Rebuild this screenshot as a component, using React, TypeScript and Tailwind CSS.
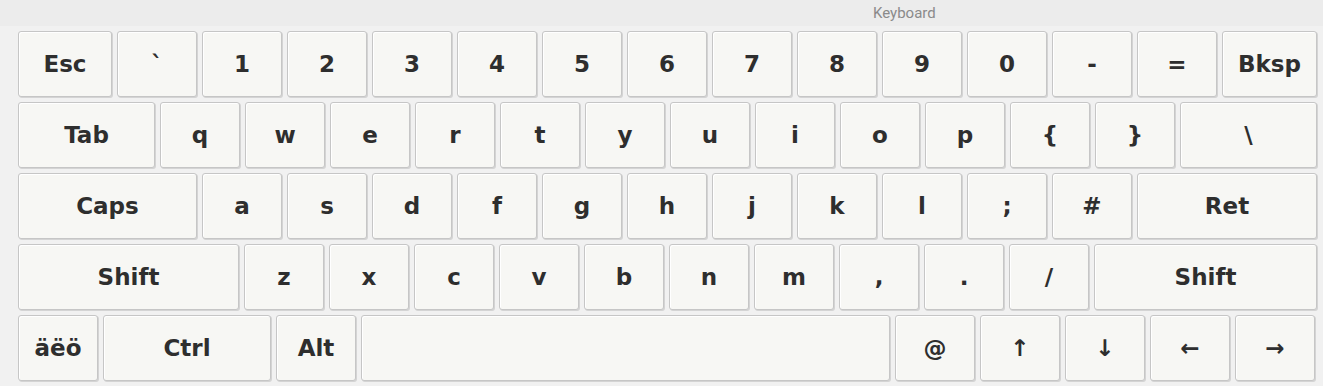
import React from "react";

type K = { l: string; w?: string };

const rows: K[][] = [
  [
    { l: "Esc", w: "w-[94px]" },
    { l: "`" }, { l: "1" }, { l: "2" }, { l: "3" }, { l: "4" }, { l: "5" }, { l: "6" },
    { l: "7" }, { l: "8" }, { l: "9" }, { l: "0" }, { l: "-" }, { l: "=" },
    { l: "Bksp", w: "flex-1" },
  ],
  [
    { l: "Tab", w: "w-[137px]" },
    { l: "q" }, { l: "w" }, { l: "e" }, { l: "r" }, { l: "t" }, { l: "y" }, { l: "u" },
    { l: "i" }, { l: "o" }, { l: "p" }, { l: "{" }, { l: "}" },
    { l: "\\", w: "flex-1" },
  ],
  [
    { l: "Caps", w: "w-[179px]" },
    { l: "a" }, { l: "s" }, { l: "d" }, { l: "f" }, { l: "g" }, { l: "h" }, { l: "j" },
    { l: "k" }, { l: "l" }, { l: ";" }, { l: "#" },
    { l: "Ret", w: "flex-1" },
  ],
  [
    { l: "Shift", w: "w-[221px]" },
    { l: "z" }, { l: "x" }, { l: "c" }, { l: "v" }, { l: "b" }, { l: "n" }, { l: "m" },
    { l: "," }, { l: "." }, { l: "/" },
    { l: "Shift", w: "flex-1" },
  ],
  [
    { l: "äëö" },
    { l: "Ctrl", w: "w-[168px]" },
    { l: "Alt" },
    { l: "", w: "w-[529px]" },
    { l: "@" }, { l: "↑" }, { l: "↓" }, { l: "←" }, { l: "→" },
  ],
];

function Key({ k }: { k: K }) {
  return (
    <div
      className={`${k.w ?? "w-20"} h-[66px] shrink-0 flex items-center justify-center rounded-[3px] border border-[#c6c6c6] bg-[#f7f7f4] shadow-[inset_1px_1px_0_#ffffff,1px_1px_0_#d4d4d4] text-[23px] font-bold text-[#2e2e2e] leading-none select-none`}
    >
      {k.l}
    </div>
  );
}

export default function App() {
  return (
    <div
      className="w-[1323px] h-[386px] bg-[#f1f1f1] overflow-hidden"
      style={{ fontFamily: '"DejaVu Sans", sans-serif' }}
    >
      <div className="h-[26px] bg-[#ececec] flex items-center pl-[873px]">
        <span className="text-[15px] text-[#8a8a8a] font-['Roboto',sans-serif] leading-none">
          Keyboard
        </span>
      </div>
      <div className="pl-[18px] pr-[6px] pt-[5px] flex flex-col gap-[5px]">
        {rows.map((r, i) => (
          <div key={i} className="flex gap-[5px]">
            {r.map((k, j) => (
              <Key key={j} k={k} />
            ))}
          </div>
        ))}
      </div>
    </div>
  );
}
